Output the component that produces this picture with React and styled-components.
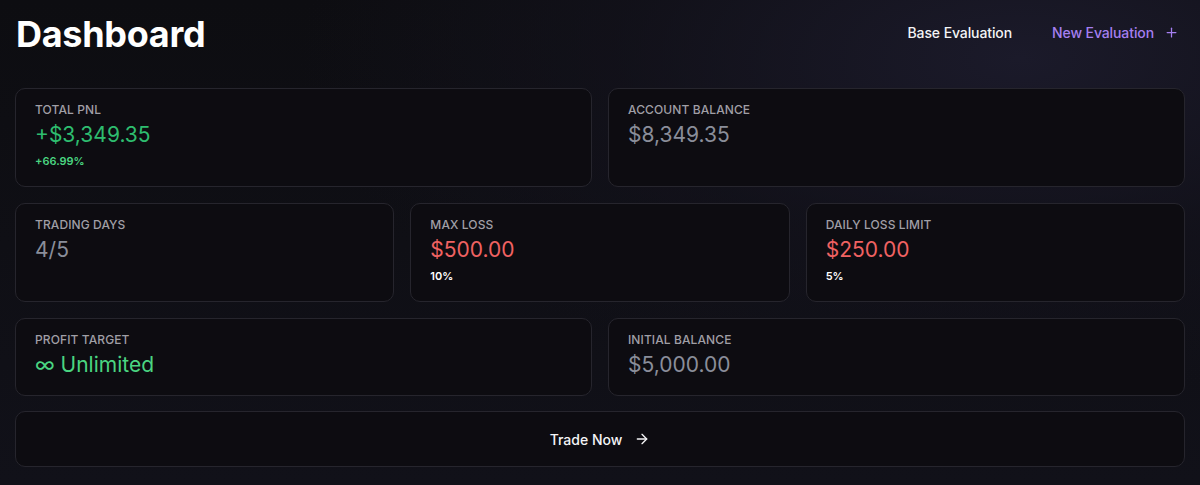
import React from "react";
import styled, { createGlobalStyle } from "styled-components";
import { Plus, ArrowRight } from "lucide-react";

const GlobalStyle = createGlobalStyle`
  html, body {
    margin: 0;
    padding: 0;
    background: #0c0c10;
  }
  body {
    font-family: Inter, "Noto Sans", sans-serif;
    color: #fff;
  }
`;

const Page = styled.div`
  min-height: 485px;
  box-sizing: border-box;
  padding: 14px 15px 18px;
  background: radial-gradient(ellipse 900px 420px at 85% 12%, #1b1a2a 0%, rgba(20, 19, 30, 0.6) 45%, rgba(12, 12, 16, 0) 80%),
    linear-gradient(180deg, #0d0d11 0%, #111119 100%);
`;

const Header = styled.header`
  display: flex;
  align-items: center;
  justify-content: space-between;
  height: 40px;
  margin-bottom: 34px;
`;

const Title = styled.h1`
  margin: 0 0 0 1px;
  font-size: 36px;
  font-weight: 700;
  letter-spacing: -0.3px;
  color: #fff;
`;

const Actions = styled.div`
  display: flex;
  align-items: center;
  gap: 40px;
  padding-right: 6px;
  margin-top: -3px;
`;

const LinkButton = styled.button`
  display: flex;
  align-items: center;
  gap: 10px;
  border: none;
  background: none;
  padding: 0;
  font-family: inherit;
  font-size: 14px;
  font-weight: 500;
  letter-spacing: -0.1px;
  color: ${(p) => (p.$accent ? "#a57ff0" : "#f4f4f6")};
  cursor: pointer;
`;

const Grid = styled.div`
  display: grid;
  grid-template-columns: repeat(${(p) => p.$cols}, 1fr);
  gap: 16px;
  margin-bottom: ${(p) => p.$mb || 16}px;
`;

const Card = styled.div`
  box-sizing: border-box;
  height: ${(p) => p.$h}px;
  padding: 13px 19px;
  border: 1px solid #26252d;
  border-radius: 10px;
  background: #0d0c11;
`;

const Label = styled.div`
  font-size: 12px;
  font-weight: 500;
  letter-spacing: 0.1px;
  text-transform: uppercase;
  color: #a09fa6;
  line-height: 16px;
`;

const Value = styled.div`
  margin-top: 3px;
  font-size: 21px;
  font-weight: 400;
  line-height: 27px;
  color: ${(p) => p.$color};
`;

const Sub = styled.div`
  margin-top: 6px;
  font-size: 11px;
  font-weight: 600;
  color: ${(p) => p.$color || "#fff"};
`;

const TradeButton = styled.button`
  box-sizing: border-box;
  width: 100%;
  height: 56px;
  display: flex;
  align-items: center;
  justify-content: center;
  gap: 12px;
  border: 1px solid #26252d;
  border-radius: 10px;
  background: #0d0c11;
  font-family: inherit;
  font-size: 14px;
  font-weight: 500;
  color: #f4f4f6;
  cursor: pointer;
`;

const GREEN = "#2ebd6f";
const LIGHT_GREEN = "#4ad581";
const RED = "#f06262";
const GREY = "#8a8e9a";

const Stat = ({ label, value, color, sub, subColor, h }) => (
  <Card $h={h}>
    <Label>{label}</Label>
    <Value $color={color}>{value}</Value>
    {sub && <Sub $color={subColor}>{sub}</Sub>}
  </Card>
);

export default function App() {
  return (
    <>
      <GlobalStyle />
      <Page>
        <Header>
          <Title>Dashboard</Title>
          <Actions>
            <LinkButton>Base Evaluation</LinkButton>
            <LinkButton $accent>
              New Evaluation <Plus size={15} strokeWidth={2} />
            </LinkButton>
          </Actions>
        </Header>

        <Grid $cols={2}>
          <Stat h={99} label="Total PNL" value="+$3,349.35" color={GREEN} sub="+66.99%" subColor={LIGHT_GREEN} />
          <Stat h={99} label="Account Balance" value="$8,349.35" color={GREY} />
        </Grid>

        <Grid $cols={3}>
          <Stat h={99} label="Trading Days" value="4/5" color={GREY} />
          <Stat h={99} label="Max Loss" value="$500.00" color={RED} sub="10%" />
          <Stat h={99} label="Daily Loss Limit" value="$250.00" color={RED} sub="5%" />
        </Grid>

        <Grid $cols={2} $mb={15}>
          <Stat h={78} label="Profit Target" value="∞ Unlimited" color={LIGHT_GREEN} />
          <Stat h={78} label="Initial Balance" value="$5,000.00" color={GREY} />
        </Grid>

        <TradeButton>
          Trade Now <ArrowRight size={16} strokeWidth={2} />
        </TradeButton>
      </Page>
    </>
  );
}
